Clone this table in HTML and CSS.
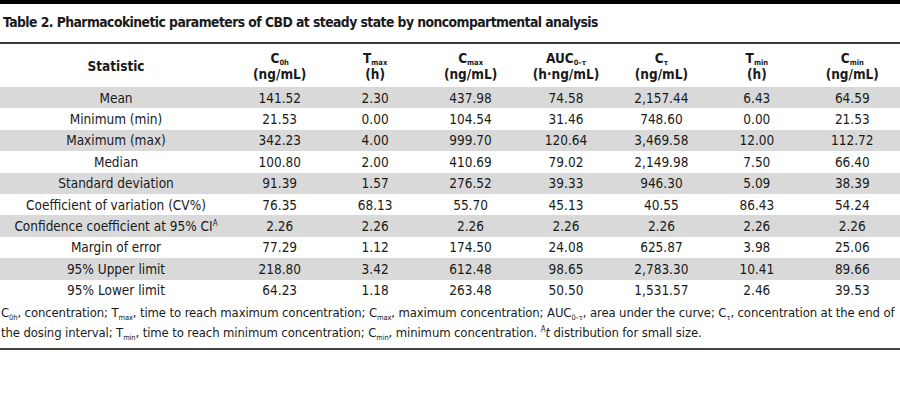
FILE: index.html
```html
<!DOCTYPE html>
<html>
<head>
<meta charset="utf-8">
<link rel="stylesheet" href="styles.css">
</head>
<body>
<div class="topbar"></div>
<div class="title">Table 2. Pharmacokinetic parameters of CBD at steady state by noncompartmental analysis</div>
<table class="tbl">
  <colgroup>
    <col class="c-stat"><col><col><col><col><col><col><col>
  </colgroup>
  <thead>
    <tr>
      <th>Statistic</th>
      <th>C<sub>0h</sub><br>(ng/mL)</th>
      <th>T<sub>max</sub><br>(h)</th>
      <th>C<sub>max</sub><br>(ng/mL)</th>
      <th>AUC<sub>0–τ</sub><br>(h·ng/mL)</th>
      <th>C<sub>τ</sub><br>(ng/mL)</th>
      <th>T<sub>min</sub><br>(h)</th>
      <th>C<sub>min</sub><br>(ng/mL)</th>
    </tr>
  </thead>
  <tbody>
    <tr class="alt"><td>Mean</td><td>141.52</td><td>2.30</td><td>437.98</td><td>74.58</td><td>2,157.44</td><td>6.43</td><td>64.59</td></tr>
    <tr><td>Minimum (min)</td><td>21.53</td><td>0.00</td><td>104.54</td><td>31.46</td><td>748.60</td><td>0.00</td><td>21.53</td></tr>
    <tr class="alt"><td>Maximum (max)</td><td>342.23</td><td>4.00</td><td>999.70</td><td>120.64</td><td>3,469.58</td><td>12.00</td><td>112.72</td></tr>
    <tr><td>Median</td><td>100.80</td><td>2.00</td><td>410.69</td><td>79.02</td><td>2,149.98</td><td>7.50</td><td>66.40</td></tr>
    <tr class="alt"><td>Standard deviation</td><td>91.39</td><td>1.57</td><td>276.52</td><td>39.33</td><td>946.30</td><td>5.09</td><td>38.39</td></tr>
    <tr><td>Coefficient of variation (CV%)</td><td>76.35</td><td>68.13</td><td>55.70</td><td>45.13</td><td>40.55</td><td>86.43</td><td>54.24</td></tr>
    <tr class="alt"><td>Confidence coefficient at 95% CI<sup>A</sup></td><td>2.26</td><td>2.26</td><td>2.26</td><td>2.26</td><td>2.26</td><td>2.26</td><td>2.26</td></tr>
    <tr><td>Margin of error</td><td>77.29</td><td>1.12</td><td>174.50</td><td>24.08</td><td>625.87</td><td>3.98</td><td>25.06</td></tr>
    <tr class="alt"><td>95% Upper limit</td><td>218.80</td><td>3.42</td><td>612.48</td><td>98.65</td><td>2,783.30</td><td>10.41</td><td>89.66</td></tr>
    <tr><td>95% Lower limit</td><td>64.23</td><td>1.18</td><td>263.48</td><td>50.50</td><td>1,531.57</td><td>2.46</td><td>39.53</td></tr>
  </tbody>
</table>
<div class="note">C<sub>0h</sub>, concentration; T<sub>max</sub>, time to reach maximum concentration; C<sub>max</sub>, maximum concentration; AUC<sub>0–τ</sub>, area under the curve; C<sub>τ</sub>, concentration at the end of the dosing interval; T<sub>min</sub>, time to reach minimum concentration; C<sub>min</sub>, minimum concentration. <sup>A</sup><i>t</i> distribution for small size.</div>
</body>
</html>
```
FILE: styles.css
```css
* { box-sizing: border-box; }
body {
  margin: 0;
  background: #fff;
  color: #1a1a1a;
  font-family: "DejaVu Sans Condensed", "DejaVu Sans", sans-serif;
  font-stretch: condensed;
}
.topbar {
  height: 4px;
  background: #000;
}
.title {
  height: 40px;
  padding-left: 3px;
  font-size: 13.8px;
  font-weight: bold;
  letter-spacing: -0.55px;
  line-height: 36px;
  border-bottom: 2px solid #3a3a3a;
  white-space: nowrap;
}
.tbl {
  width: 900px;
  border-collapse: collapse;
  table-layout: fixed;
}
.c-stat { width: 232px; }
.tbl th {
  height: 43px;
  font-size: 13.5px;
  font-weight: bold;
  text-align: center;
  vertical-align: middle;
  line-height: 16px;
  padding: 1px 0 0;
}
.tbl td {
  height: 21.4px;
  padding: 0;
  font-size: 13.5px;
  text-align: center;
  vertical-align: middle;
  line-height: 16px;
  white-space: nowrap;
}
.tbl tr.alt td { background: #d9d9d9; }
.tbl sub {
  font-size: 7.5px;
  vertical-align: -2px;
  line-height: 0;
}
.tbl sup, .note sup {
  font-size: 8px;
  vertical-align: 5px;
  line-height: 0;
}
.note {
  font-size: 13px;
  letter-spacing: -0.12px;
  line-height: 20px;
  padding: 2px 2px 5px 1px;
  border-bottom: 2px solid #444;
}
.note sub {
  font-size: 7.5px;
  vertical-align: -3px;
  line-height: 0;
}
```
